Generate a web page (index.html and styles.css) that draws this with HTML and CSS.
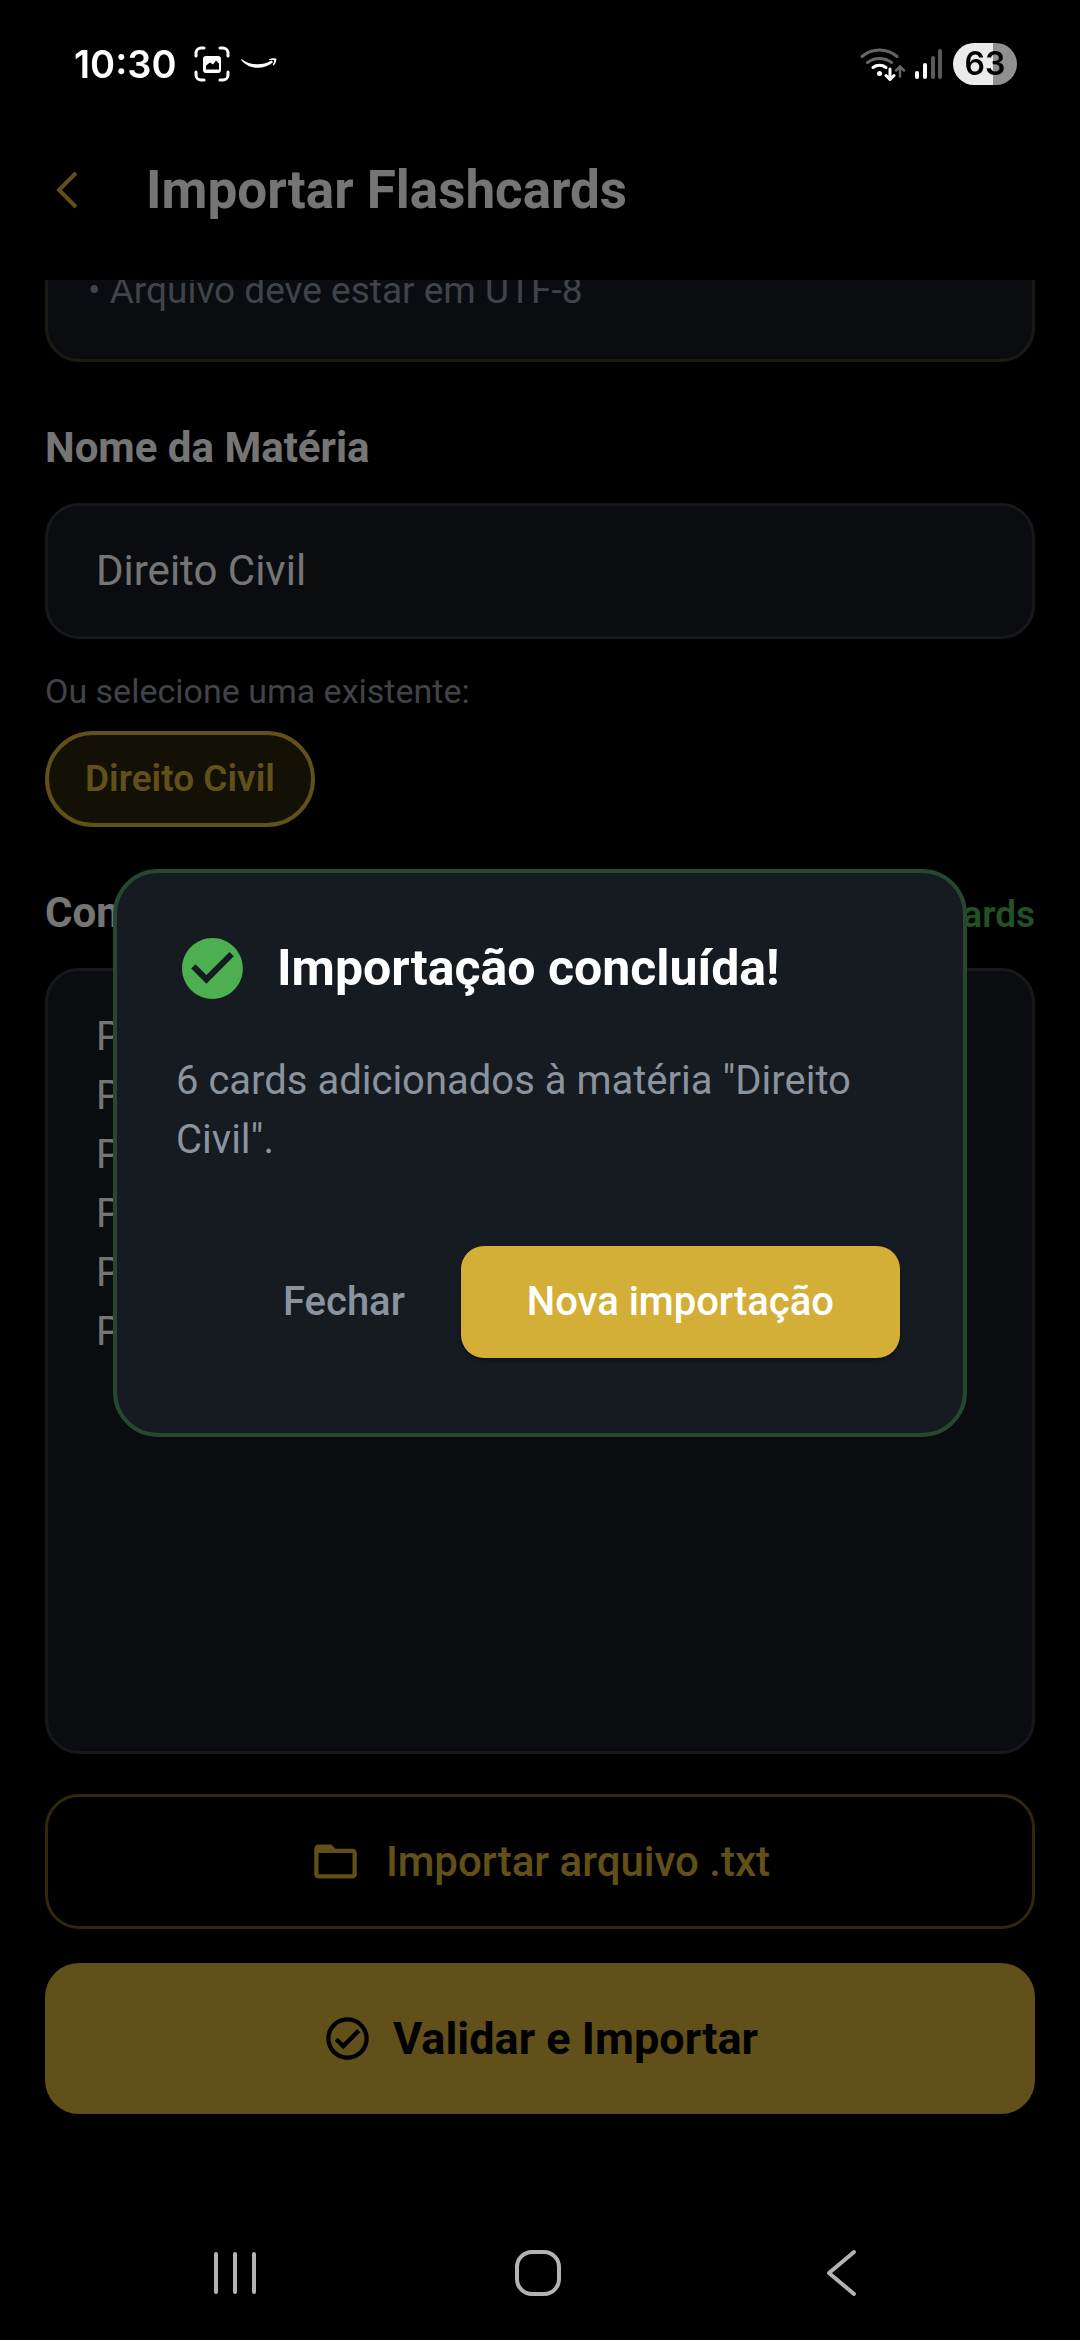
FILE: index.html
```html
<!DOCTYPE html>
<html lang="pt-BR">
<head>
    <meta charset="UTF-8">
    <meta name="viewport" content="width=device-width, initial-scale=1.0">
    <title>Importar Flashcards</title>
    <link rel="stylesheet" href="styles.css">
</head>
<body>
    <div class="status-bar">
        <div class="status-left">
            <span class="clock">10:30</span>
            <svg class="icon-capture" viewBox="0 0 36 36" fill="none">
                <path d="M2 10V7a5 5 0 0 1 5-5h3M26 2h3a5 5 0 0 1 5 5v3M34 26v3a5 5 0 0 1-5 5h-3M10 34H7a5 5 0 0 1-5-5v-3" stroke="#fff" stroke-width="3" stroke-linecap="round"/>
                <rect x="9" y="10" width="18" height="17" rx="3" fill="#fff"/>
                <path d="M12 23.500v-4l4-3 3 2 3-4 3 3v6z" fill="#000"/>
            </svg>
            <svg class="icon-smile" viewBox="0 0 36 12" fill="#fff">
                <path d="M.3 1C8 7 20 8.500 30.500 2.500l1.500 1.700C22 12.500 8 11.500.3 2.300z"/>
                <path d="M28 1.200C31 .2 34.500-.2 35.200.8c.6 1.200-.5 4.700-2.700 6.700l-.8-.4c.9-2 1.700-4.200 1.300-4.800S30 2 28 2z"/>
            </svg>
        </div>
        <div class="status-right">
            <svg class="icon-wifi" viewBox="0 0 46 34" fill="none" stroke-linecap="round">
                <path d="M2 9.500a27 27 0 0 1 35 0M7.500 15.500a20 20 0 0 1 24 0" stroke="#666" stroke-width="3"/>
                <path d="M13 20.500a11 11 0 0 1 13 0" stroke="#fff" stroke-width="3"/>
                <circle cx="19.500" cy="26.500" r="2.500" fill="#fff"/>
                <path d="M30 22v10M26 28.500l4 4 4-4" stroke="#fff" stroke-width="3"/>
                <path d="M40 29.500V20M36 23.500l4-4 4 4" stroke="#666" stroke-width="2.500"/>
            </svg>
            <svg class="icon-signal" viewBox="0 0 28 30">
                <rect x="0" y="22" width="4" height="8" rx="2" fill="#fff"/>
                <rect x="8" y="14" width="4" height="16" rx="2" fill="#fff"/>
                <rect x="16" y="7" width="4" height="23" rx="2" fill="#5a5a5a"/>
                <rect x="23" y="0" width="4" height="30" rx="2" fill="#5a5a5a"/>
            </svg>
            <span class="battery">63</span>
        </div>
    </div>

    <header class="app-bar">
        <button class="back" type="button" aria-label="Voltar">
            <svg viewBox="0 0 22 38" fill="none"><path d="M20 2L3 19l17 17" stroke="currentColor" stroke-width="4"/></svg>
        </button>
        <h1>Importar Flashcards</h1>
    </header>

    <main class="content">
        <section class="info-card">
            <p>• Arquivo deve estar em UTF-8</p>
        </section>

        <label class="label" for="materia">Nome da Matéria</label>
        <input class="field" type="text" id="materia" value="Direito Civil">

        <p class="hint">Ou selecione uma existente:</p>
        <button class="chip" type="button">Direito Civil</button>

        <div class="label-row">
            <label class="label" for="conteudo">Conteúdo</label>
            <span class="count">6 cards</span>
        </div>
        <textarea class="field field-area" id="conteudo">Pergunta 1;Resposta 1
Pergunta 2;Resposta 2
Pergunta 3;Resposta 3
Pergunta 4;Resposta 4
Pergunta 5;Resposta 5
Pergunta 6;Resposta 6</textarea>

        <button class="btn btn-outline" type="button">
            <svg viewBox="0 0 24 24" fill="currentColor"><path d="M20 6h-8l-2-2H4c-1.100 0-1.990.9-1.990 2L2 18c0 1.100.9 2 2 2h16c1.100 0 2-.9 2-2V8c0-1.100-.9-2-2-2zm0 12H4V8h16v10z"/></svg>
            Importar arquivo .txt
        </button>
        <button class="btn btn-primary" type="button">
            <svg viewBox="0 0 24 24" fill="currentColor"><path d="M12 2C6.480 2 2 6.480 2 12s4.480 10 10 10 10-4.480 10-10S17.520 2 12 2zm0 18c-4.410 0-8-3.590-8-8s3.590-8 8-8 8 3.590 8 8-3.590 8-8 8zm4.590-12.420L10 14.170l-2.590-2.580L6 13l4 4 8-8z"/></svg>
            Validar e Importar
        </button>
    </main>

    <nav class="nav-bar">
        <button type="button" aria-label="Recentes">
            <svg viewBox="0 0 48 48" fill="none" stroke="currentColor" stroke-width="4" stroke-linecap="round"><path d="M5 5v38M24 5v38M43 5v38"/></svg>
        </button>
        <button type="button" aria-label="Início">
            <svg viewBox="0 0 48 48" fill="none" stroke="currentColor" stroke-width="4"><rect x="3" y="3" width="42" height="42" rx="15"/></svg>
        </button>
        <button type="button" aria-label="Voltar">
            <svg viewBox="0 0 48 48" fill="none" stroke="currentColor" stroke-width="4" stroke-linecap="round" stroke-linejoin="round"><path d="M37 3L12 24l25 21"/></svg>
        </button>
    </nav>

    <div class="overlay">
        <div class="dialog" role="dialog" aria-labelledby="dialogTitle">
            <div class="dialog-head">
                <svg viewBox="0 0 24 24" fill="currentColor"><path d="M12 2C6.480 2 2 6.480 2 12s4.480 10 10 10 10-4.480 10-10S17.520 2 12 2zm-2 15l-5-5 1.410-1.410L10 14.170l7.590-7.590L19 8l-9 9z"/></svg>
                <h2 id="dialogTitle">Importação concluída!</h2>
            </div>
            <p class="dialog-text">6 cards adicionados à matéria "Direito Civil".</p>
            <div class="dialog-actions">
                <button class="btn-text" type="button">Fechar</button>
                <button class="btn-gold" type="button">Nova importação</button>
            </div>
        </div>
    </div>
</body>
</html>
```
FILE: styles.css
```css
* {
    box-sizing: border-box;
}
body {
    margin: 0;
    min-height: 100vh;
    display: flex;
    flex-direction: column;
    background: #000;
    color: #fff;
    font-family: Roboto, sans-serif;
}
h1, h2, p {
    margin: 0;
}
button, input, textarea {
    font-family: inherit;
    margin: 0;
}
button {
    background: none;
    border: none;
    padding: 0;
    color: inherit;
    cursor: pointer;
}
svg {
    display: block;
    flex: none;
}

/* Barra de status */
.status-bar {
    position: relative;
    z-index: 3;
    display: flex;
    justify-content: space-between;
    align-items: center;
    height: 128px;
    padding: 0 63px 0 74px;
    font-family: Inter, sans-serif;
    font-weight: 600;
}
.status-left, .status-right {
    display: flex;
    align-items: center;
}
.clock {
    font-size: 38px;
}
.icon-capture {
    width: 36px;
    height: 36px;
    margin-left: 17px;
}
.icon-smile {
    width: 36px;
    height: 12px;
    margin-left: 11px;
}
.icon-wifi {
    width: 46px;
    height: 34px;
}
.icon-signal {
    width: 28px;
    height: 30px;
    margin: 0 10px 0 9px;
}
.battery {
    width: 64px;
    height: 42px;
    border-radius: 21px;
    background: linear-gradient(to right, #ebebeb 62%, #909090 62%);
    color: #000;
    font-size: 32px;
    line-height: 42px;
    text-align: center;
}

/* Topo */
.app-bar {
    position: relative;
    z-index: 1;
    display: flex;
    align-items: center;
    height: 152px;
    padding: 0 56px 28px;
    background: #000;
}
.back {
    color: #d4af37;
}
.back svg {
    width: 22px;
    height: 38px;
}
h1 {
    margin-left: 68px;
    font-size: 53px;
    line-height: 62px;
    font-weight: 700;
}

/* Formulário */
.content {
    flex: 1;
    display: flex;
    flex-direction: column;
    padding: 0 45px 92px;
}
.info-card {
    /* rolado para baixo do topo */
    margin-top: -42px;
    padding: 28px 40px 46px;
    background: #161b22;
    border: 3px solid rgba(212, 175, 55, 0.2);
    border-radius: 34px;
    color: #8b949e;
    font-size: 37px;
    line-height: 44px;
}
.label {
    margin: 61px 0 30px;
    font-size: 42px;
    line-height: 50px;
    font-weight: 700;
}
.field {
    width: 100%;
    padding: 40px 48px;
    background: #161b22;
    border: 3px solid #30363d;
    border-radius: 34px;
    color: #fff;
    font-size: 42px;
    line-height: 50px;
    outline: none;
}
.hint {
    margin: 32px 0 20px;
    color: #8b949e;
    font-size: 34px;
    line-height: 40px;
}
.chip {
    align-self: flex-start;
    padding: 22px 36px;
    background: rgba(212, 175, 55, 0.2);
    border: 4px solid #d4af37;
    border-radius: 48px;
    color: #d4af37;
    font-size: 37px;
    line-height: 44px;
    font-weight: 600;
}
.label-row {
    display: flex;
    justify-content: space-between;
    align-items: baseline;
}
.count {
    color: #4caf50;
    font-size: 37px;
    font-weight: 600;
}
.field-area {
    display: block;
    flex: 1;
    padding: 36px 48px;
    font-size: 40px;
    line-height: 59px;
    resize: none;
}
.btn {
    display: flex;
    justify-content: center;
    align-items: center;
    gap: 25px;
    font-size: 42px;
    line-height: 50px;
}
.btn svg {
    width: 51px;
    height: 51px;
}
.btn-outline {
    margin: 40px 0 34px;
    padding: 39px;
    border: 3px solid rgba(212, 175, 55, 0.5);
    border-radius: 34px;
    color: #d4af37;
    font-weight: 500;
}
.btn-primary {
    padding: 50px;
    background: #d4af37;
    border-radius: 34px;
    color: #000;
    font-size: 45px;
    font-weight: 700;
    gap: 20px;
}

/* Navegação do sistema */
.nav-bar {
    position: relative;
    z-index: 3;
    display: flex;
    justify-content: space-around;
    align-items: center;
    height: 134px;
    padding: 0 88px 0 83px;
    color: #b3b3b3;
}
.nav-bar svg {
    width: 48px;
    height: 48px;
}

/* Diálogo */
.overlay {
    position: fixed;
    inset: 0;
    z-index: 2;
    display: flex;
    align-items: center;
    justify-content: center;
    padding: 0 113px 35px;
    background: rgba(0, 0, 0, 0.54);
}
.dialog {
    flex: 1;
    padding: 59px 63px 75px 59px;
    background: #161b22;
    border: 4px solid #264730;
    border-radius: 45px;
}
.dialog-head {
    display: flex;
    align-items: center;
    gap: 28px;
    color: #4caf50;
}
.dialog-head svg {
    width: 73px;
    height: 73px;
}
h2 {
    color: #fff;
    font-size: 50px;
    line-height: 60px;
    font-weight: 700;
}
.dialog-text {
    margin: 46px 0 77px;
    color: #8b949e;
    font-size: 40px;
    line-height: 59px;
}
.dialog-actions {
    display: flex;
    justify-content: flex-end;
    gap: 22px;
}
.btn-text, .btn-gold {
    padding: 31px 34px;
    font-size: 40px;
    line-height: 50px;
    font-weight: 500;
}
.btn-text {
    color: #8b949e;
}
.btn-gold {
    padding: 31px 66px;
    background: #d4af37;
    border-radius: 23px;
    color: #fff;
    box-shadow: 0 2px 4px rgba(0, 0, 0, 0.4);
}
```
